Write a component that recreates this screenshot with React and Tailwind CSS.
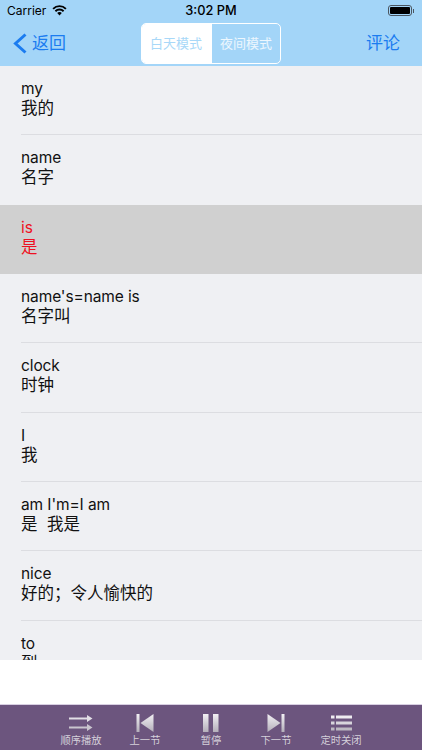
const words = [
  { en: "my", zh: "我的" },
  { en: "name", zh: "名字" },
  { en: "is", zh: "是", active: true },
  { en: "name's=name is", zh: "名字叫" },
  { en: "clock", zh: "时钟" },
  { en: "I", zh: "我" },
  { en: "am I'm=I am", zh: "是  我是" },
  { en: "nice", zh: "好的；令人愉快的" },
  { en: "to", zh: "到" },
];

function WifiIcon() {
  return (
    <svg width="15" height="11" viewBox="0 0 15 11" fill="none" stroke="#000" strokeWidth="1.9">
      <path d="M1.100 3.800C4.700.2 10.300.2 13.900 3.800" />
      <path d="M3.400 6.200c2.300-2.200 5.900-2.200 8.200 0" />
      <path d="M7.500 7.100c-.9 0-1.700.4-2.300 1l2.300 2.500 2.300-2.500c-.6-.6-1.400-1-2.300-1z" fill="#000" stroke="none" />
    </svg>
  );
}

function BackIcon() {
  return (
    <svg width="14" height="21" viewBox="0 0 14 21" fill="none" stroke="#1b7cf0" strokeWidth="3">
      <path d="M12.500 1.500L2.500 10.500l10 9" />
    </svg>
  );
}

function IconFill({ id }) {
  return (
    <defs>
      <linearGradient id={id} x1="0" y1="0" x2="0" y2="1">
        <stop offset="0" stopColor="#f2f0f4" />
        <stop offset="1" stopColor="#b4afba" />
      </linearGradient>
    </defs>
  );
}

function ShuffleIcon() {
  return (
    <svg width="24" height="18" viewBox="0 0 24 18" fill="#e2dfe6">
      <path d="M0 3.500h18V1l5.500 3.500L18 8V5.500H0z" />
      <path d="M0 12.500h18V10l5.500 3.500L18 17v-2.500H0z" fill="#c9c5ce" />
    </svg>
  );
}

function PrevIcon() {
  return (
    <svg width="18" height="18" viewBox="0 0 18 18" fill="url(#prev-fill)">
      <IconFill id="prev-fill" />
      <rect x="0.500" y="0" width="3" height="18" />
      <path d="M17.500 0v18L4.500 9z" />
    </svg>
  );
}

function PauseIcon() {
  return (
    <svg width="16" height="18" viewBox="0 0 16 18" fill="url(#pause-fill)">
      <IconFill id="pause-fill" />
      <rect x="0" y="0" width="5.500" height="18" />
      <rect x="10" y="0" width="5.500" height="18" />
    </svg>
  );
}

function NextIcon() {
  return (
    <svg width="18" height="18" viewBox="0 0 18 18" fill="url(#next-fill)">
      <IconFill id="next-fill" />
      <path d="M0.500 0v18L13.500 9z" />
      <rect x="14.500" y="0" width="3" height="18" />
    </svg>
  );
}

function ListIcon() {
  return (
    <svg width="21" height="16" viewBox="0 0 21 16">
      <g fill="#eeecf0">
        <rect x="0" y="0.500" width="3.500" height="3" />
        <rect x="5" y="0.500" width="16" height="3" />
      </g>
      <g fill="#d8d5dc">
        <rect x="0" y="6.500" width="3.500" height="3" />
        <rect x="5" y="6.500" width="16" height="3" />
      </g>
      <g fill="#bdb9c2">
        <rect x="0" y="12.500" width="3.500" height="3" />
        <rect x="5" y="12.500" width="16" height="3" />
      </g>
    </svg>
  );
}

function ToolButton({ icon, label, className }) {
  return (
    <div className={`absolute top-0 flex h-full w-[60px] -translate-x-1/2 flex-col items-center ${className}`}>
      <div className="mt-[9px] flex h-[18px] items-center justify-center">{icon}</div>
      <span className="mt-[2px] text-[10.3px] leading-[14px] whitespace-nowrap text-[#d5d0da]">{label}</span>
    </div>
  );
}

export default function App() {
  return (
    <div className="flex h-[750px] w-[422px] flex-col overflow-hidden bg-white font-['Liberation_Sans','Noto_Sans_CJK_SC',sans-serif]">
      {/* Status + nav */}
      <div className="h-[66px] shrink-0 bg-[#a3d5f8]">
        <div className="relative flex h-[21px] items-center px-[7px] text-black">
          <span className="font-['Inter',sans-serif] text-[12px]">Carrier</span>
          <span className="ml-[6px]"><WifiIcon /></span>
          <span className="absolute left-0 right-0 text-center font-['Inter',sans-serif] text-[12.8px] font-medium">3:02 PM</span>
          <div className="ml-auto mr-[1px] flex items-center">
            <div className="h-[11px] w-[24px] rounded-[3px] border border-[#4a5560] p-[1px]">
              <div className="h-full w-full rounded-[1px] bg-black" />
            </div>
            <div className="ml-[1px] h-[4px] w-[1px] bg-[#4a5560]" />
          </div>
        </div>
        <div className="relative flex h-[45px] items-center justify-between">
          <div className="flex items-center text-[#1b7cf0]">
            <span className="ml-[13px]"><BackIcon /></span>
            <span className="ml-[5px] text-[17px]">返回</span>
          </div>
          <div className="absolute left-[141px] top-[2px] flex h-[41px] w-[140px] overflow-hidden rounded-[5px] border border-white text-[13px]">
            <div className="flex w-[70px] items-center justify-center bg-white pr-[2px] text-[#a8d8f8]">白天模式</div>
            <div className="flex flex-1 items-center justify-center text-white/80">夜间模式</div>
          </div>
          <span className="mr-[22px] text-[17px] text-[#1b7cf0]">评论</span>
        </div>
      </div>

      {/* Word list */}
      <div className="h-[594px] shrink-0 overflow-hidden bg-[#eff0f3]">
        {words.map((w, i) => (
          <div
            key={i}
            className={`relative h-[69.33px] pl-[21px] pt-[13px] ${w.active ? "bg-[#d0d0d0] text-[#ee1122]" : "text-[#111]"}`}
          >
            <div className="font-['Inter',sans-serif] text-[15.5px] leading-[19px] tracking-[-0.1px]">{w.en}</div>
            <div className="whitespace-pre font-['Noto_Sans_CJK_SC',sans-serif] text-[16.5px] leading-[18px] [word-spacing:1px]">{w.zh}</div>
            {i < words.length - 1 && !w.active && !words[i + 1].active && (
              <div className="absolute bottom-0 left-[21px] right-0 h-px bg-[#dcdde1]" />
            )}
          </div>
        ))}
      </div>

      <div className="flex-1 bg-white" />

      {/* Player toolbar */}
      <div className="relative h-[46px] shrink-0 border-t border-[#d8cfe2] bg-[#6c557e]">
        <ToolButton icon={<ShuffleIcon />} label="顺序播放" className="left-[81px]" />
        <ToolButton icon={<PrevIcon />} label="上一节" className="left-[145px]" />
        <ToolButton icon={<PauseIcon />} label="暂停" className="left-[211px]" />
        <ToolButton icon={<NextIcon />} label="下一节" className="left-[276px]" />
        <ToolButton icon={<ListIcon />} label="定时关闭" className="left-[341px]" />
      </div>
    </div>
  );
}
